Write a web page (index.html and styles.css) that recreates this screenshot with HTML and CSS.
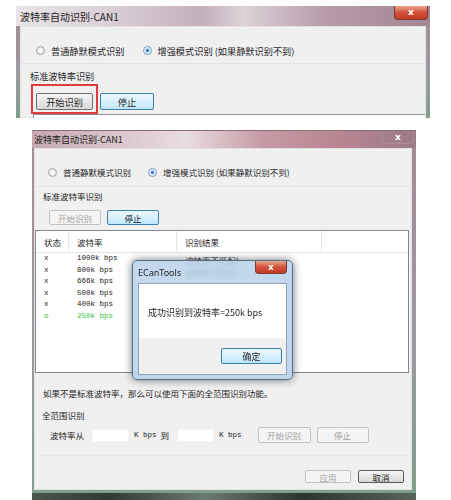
FILE: index.html
```html
<!DOCTYPE html>
<html lang="zh-CN">
<head>
  <meta charset="UTF-8" />
  <meta name="viewport" content="width=device-width, initial-scale=1.0"/>
  <title>波特率自动识别</title>
  <link rel="stylesheet" href="styles.css">
</head>
<body>
  <!-- first capture: top of the dialog, start button marked -->
  <div class="shot shot-one">
    <div class="titlebar">
      <span class="title">波特率自动识别-CAN1</span>
      <span class="close hot">x</span>
    </div>
    <div class="client">
      <div class="radios">
        <span class="radio"><span class="dot"></span>普通静默模式识别</span>
        <span class="radio"><span class="dot on"></span>增强模式识别 (如果静默识别不到)</span>
      </div>
      <div class="section-label">标准波特率识别</div>
      <div class="btn-row">
        <div class="mark"><span class="btn start">开始识别</span></div>
        <span class="btn focus stop">停止</span>
      </div>
      <div class="list-edge"></div>
    </div>
  </div>

  <!-- second capture: result of the scan -->
  <div class="shot shot-two">
    <div class="titlebar">
      <span class="title">波特率自动识别-CAN1</span>
      <span class="close">x</span>
    </div>
    <div class="client">
      <div class="radios">
        <span class="radio"><span class="dot"></span>普通静默模式识别</span>
        <span class="radio"><span class="dot on"></span>增强模式识别 (如果静默识别不到)</span>
      </div>
      <div class="section-label">标准波特率识别</div>
      <div class="btn-row">
        <span class="btn disabled">开始识别</span>
        <span class="btn focus">停止</span>
      </div>

      <div class="list">
        <div class="list-head">
          <span class="col c1">状态</span>
          <span class="col c2">波特率</span>
          <span class="col c3">识别结果</span>
          <span class="col c4"></span>
        </div>
        <div class="list-body">
          <div class="row"><span class="c1">x</span><span class="c2">1000k bps</span><span class="c3 res">波特率不匹配!</span></div>
          <div class="row"><span class="c1">x</span><span class="c2">800k bps</span><span class="c3 res">波特率不匹配!</span></div>
          <div class="row"><span class="c1">x</span><span class="c2">666k bps</span><span class="c3"></span></div>
          <div class="row"><span class="c1">x</span><span class="c2">500k bps</span><span class="c3"></span></div>
          <div class="row"><span class="c1">x</span><span class="c2">400k bps</span><span class="c3"></span></div>
          <div class="row ok"><span class="c1">o</span><span class="c2">250k bps</span><span class="c3"></span></div>
        </div>
      </div>

      <div class="hint">如果不是标准波特率，那么可以使用下面的全范围识别功能。</div>

      <div class="range-group">
        <div class="range-title">全范围识别</div>
        <div class="range-row">
          <span class="range-from">波特率从</span>
          <span class="field"></span>
          <span class="unit">K bps</span>
          <span class="to">到</span>
          <span class="field"></span>
          <span class="unit">K bps</span>
          <span class="btn disabled range-start">开始识别</span>
          <span class="btn disabled range-stop">停止</span>
        </div>
      </div>

      <div class="footer">
        <span class="btn disabled small">应用</span>
        <span class="btn normal small">取消</span>
      </div>
    </div>

    <div class="msgbox">
      <div class="msg-title">
        <span>ECanTools</span>
        <span class="close hot">x</span>
      </div>
      <div class="msg-text">成功识别到波特率=250k bps</div>
      <div class="msg-foot">
        <span class="btn focus ok-btn">确定</span>
      </div>
    </div>
  </div>
  <div class="desk-strip"></div>
</body>
</html>
```

FILE: styles.css
```css
* {
  box-sizing: border-box;
}

body {
  margin: 0;
  background: #ffffff;
  font-family: "Noto Sans CJK SC", "Noto Sans", sans-serif;
  color: #1e1e1e;
  width: 451px;
  height: 500px;
  overflow: hidden;
}

/* ---------- window frame ---------- */

.shot {
  position: relative;
  background: linear-gradient(to bottom, #a58a98, #9c9aa0 60%, #7f9f8c);
}

.shot-one {
  margin: 6px 0 0 16px;
  width: 414px;
  height: 112px;
  padding: 0 4px;
  overflow: hidden;
  font-size: 9.2px;
}

.shot-two {
  margin: 12px 0 0 32px;
  width: 384px;
  height: 363px;
  padding: 0 4px 3px 2px;
  font-size: 8.5px;
}

.titlebar {
  display: flex;
  align-items: center;
  justify-content: space-between;
  margin: 0 -4px;
  padding-left: 4px;
  color: #222;
}

.shot-one .titlebar {
  height: 20px;
  font-size: 10px;
  background: linear-gradient(to right, #e9e4e8, #d8ccd4 25%, #c4b0bc 45%, #ddd2d8 55%, #b59aa8 75%, #a48795);
}

.shot-two .titlebar {
  height: 18px;
  margin-left: -2px;
  padding-left: 2px;
  font-size: 9px;
  background: linear-gradient(to right, #c7a8b0, #e9dde0 40%, #c69aa4 60%, #b88591 80%, #9d7a88);
  border-top: 1px solid #8a6c78;
}

.close {
  align-self: flex-start;
  width: 34px;
  height: 14px;
  margin-right: 2px;
  border: 1px solid #8f6e78;
  border-top: none;
  border-radius: 0 0 4px 4px;
  color: #fff;
  font: bold 9px "DejaVu Sans", sans-serif;
  text-align: center;
  line-height: 13px;
  background: linear-gradient(to bottom, #d9c7cc, #b89aa5);
}

.close.hot {
  background: linear-gradient(to bottom, #e9a58f, #d4523b 50%, #c23a26);
  border-color: #7a3a30;
}

.shot-two .titlebar .close {
  width: 32px;
  height: 13px;
  border-color: #a98c96;
  background: transparent;
}

.client {
  background: #f0f0f0;
  border: 1px solid #e2e2e2;
}

.shot-one .client {
  height: 92px;
}

.shot-two .client {
  height: 342px;
}

/* ---------- controls ---------- */

.radios {
  display: flex;
  align-items: center;
  border-bottom: 1px solid #e2e2e2;
}

.shot-one .radios {
  height: 37px;
  padding: 11px 0 0 15px;
  gap: 18px;
}

.shot-two .radios {
  height: 38px;
  padding: 9px 0 0 13px;
  gap: 17px;
}

.radio {
  display: flex;
  align-items: center;
  gap: 6px;
}

.dot {
  width: 9px;
  height: 9px;
  border-radius: 50%;
  border: 1px solid #a5a5a5;
  background: radial-gradient(circle, #ffffff, #dcdcdc);
}

.dot.on {
  border-color: #7a9cc0;
  background: radial-gradient(circle, #2e6db8 0, #5d9ad8 30%, #dde8f4 45%, #f4f8fc);
}

.section-label {
  line-height: 12px;
}

.shot-one .section-label {
  margin: 6px 0 0 9px;
}

.shot-two .section-label {
  margin: 3px 0 0 8px;
}

.btn {
  display: flex;
  align-items: center;
  justify-content: center;
  border: 1px solid #707070;
  border-radius: 2px;
  background: linear-gradient(to bottom, #f6f6f6, #e6e6e6 50%, #d8d8d8);
  color: #1e1e1e;
}

.btn.focus {
  border-color: #3c7fb1;
  background: linear-gradient(to bottom, #eaf6fd, #d9f0fc 50%, #bee6fd);
}

.btn.disabled {
  border-color: #c2c2c2;
  background: #f4f4f4;
  color: #a3a3a3;
}

.btn-row {
  display: flex;
  align-items: flex-start;
}

.shot-one .btn-row {
  margin: 2px 0 0 10px;
  gap: 2px;
}

.mark {
  width: 67px;
  height: 30px;
  border: 2px solid #e23b3b;
  padding: 7px 0 0 3px;
}

.start {
  width: 57px;
  height: 17px;
}

.stop {
  width: 54px;
  height: 17px;
  margin-top: 9px;
}

.list-edge {
  margin-left: 12px;
  width: 392px;
  height: 10px;
  border-top: 1px solid #8a8f98;
  border-left: 1px solid #8a8f98;
  background: #fff;
}

.shot-two .btn-row {
  margin: 8px 0 0 14px;
  gap: 6px;
}

.shot-two .btn-row .btn {
  width: 52px;
  height: 15px;
}

/* ---------- result list ---------- */

.list {
  margin-top: 5px;
  width: 374px;
  height: 143px;
  border: 1px solid #828790;
  background: #fff;
}

.list-head {
  display: flex;
  height: 22px;
  border-bottom: 1px solid #e5e5e5;
}

.list-head .col {
  line-height: 22px;
  padding-left: 8px;
  border-right: 1px solid #e5e5e5;
}

.c1 {
  width: 33px;
}

.c2 {
  width: 108px;
}

.c3 {
  width: 145px;
}

.list-head .c4 {
  flex: 1;
  border-right: none;
}

.list-body {
  padding-top: 1px;
}

.row {
  display: flex;
  height: 11.5px;
  line-height: 11.5px;
  font: 7.5px "Liberation Mono", "DejaVu Sans Mono", monospace;
  color: #222;
}

.row span {
  padding-left: 8px;
}

.row .res {
  font-family: "Noto Sans CJK SC", sans-serif;
  font-size: 8.5px;
  color: #444;
}

.row.ok {
  color: #34c23a;
}

/* ---------- range scan ---------- */

.hint {
  margin: 14px 0 0 8px;
  line-height: 12px;
}

.range-group {
  margin: 10px 4px 0 4px;
  height: 47px;
  border-bottom: 1px solid #e6e6e6;
}

.range-title {
  line-height: 12px;
  margin-left: 3px;
}

.range-row {
  display: flex;
  align-items: center;
  height: 16px;
  margin-top: 6px;
  padding-left: 11px;
}

.field {
  width: 37px;
  height: 13px;
  margin-left: 8px;
  background: #fff;
  border: 1px solid #f4f4f4;
}

.unit {
  margin-left: 5px;
  font: 7.5px "Liberation Mono", monospace;
  color: #222;
}

.to {
  margin-left: 4px;
}

.range-start {
  width: 53px;
  height: 16px;
  margin-left: 16px;
}

.range-stop {
  width: 52px;
  height: 16px;
  margin-left: 6px;
}

.footer {
  display: flex;
  justify-content: flex-end;
  gap: 7px;
  margin: 14px 7px 0 0;
}

.btn.small {
  width: 46px;
  height: 13px;
}

.btn.normal {
  border-color: #5a5a5a;
}

/* ---------- message box over the list ---------- */

.msgbox {
  position: absolute;
  left: 100px;
  top: 130px;
  width: 161px;
  height: 120px;
  padding: 0 5px 5px 5px;
  border: 1px solid #4f6d8c;
  border-radius: 5px;
  background: rgba(185, 209, 234, 0.85);
  backdrop-filter: blur(2px);
  box-shadow: 0 0 8px rgba(0, 0, 0, 0.55);
}

.msg-title {
  display: flex;
  align-items: flex-start;
  justify-content: space-between;
  height: 22px;
  font: 9px "Noto Sans", sans-serif;
  color: #1e1e1e;
}

.msg-title span:first-child {
  margin-top: 5px;
}

.msg-title .close {
  margin-right: 0;
  width: 32px;
  height: 13px;
}

.msg-text {
  height: 55px;
  padding: 22px 0 0 9px;
  background: #fff;
  border: 1px solid #8aa2bc;
  border-bottom: none;
  font-size: 9px;
}

.msg-foot {
  display: flex;
  justify-content: flex-end;
  height: 37px;
  padding: 10px 4px 0 0;
  background: #f0f0f0;
  border: 1px solid #8aa2bc;
  border-top: none;
}

.ok-btn {
  width: 61px;
  height: 16px;
  font-size: 9px;
}

.desk-strip {
  margin-left: 32px;
  width: 384px;
  height: 7px;
  background: linear-gradient(to right, #49564e, #2e3a34 20%, #6b7a72 45%, #2c3530 70%, #56645c);
}
```
